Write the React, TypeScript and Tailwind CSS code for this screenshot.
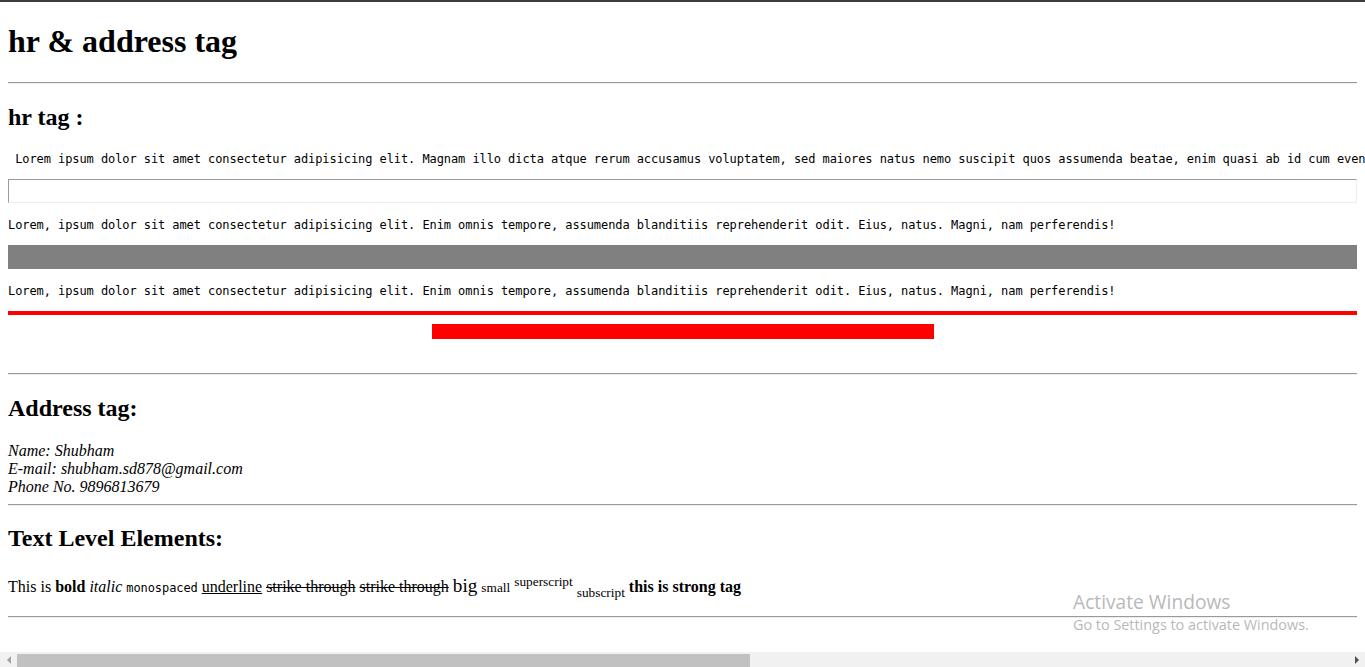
import React from "react";

const SERIF = "font-['Liberation_Serif','Times_New_Roman',serif]";
const MONO =
  "font-['DejaVu_Sans_Mono','Liberation_Mono',monospace] text-[12px] tracking-[-0.08px] leading-[14px]";

const LONG_LINE =
  " Lorem ipsum dolor sit amet consectetur adipisicing elit. Magnam illo dicta atque rerum accusamus voluptatem, sed maiores natus nemo suscipit quos assumenda beatae, enim quasi ab id cum eveniet. Quod, voluptas ratione? Odit ipsa architecto, dolorum recusandae nulla impedit quae placeat, laudantium maxime fugiat sint animi consequatur minus commodi.";

const SHORT_LINE =
  "Lorem, ipsum dolor sit amet consectetur adipisicing elit. Enim omnis tempore, assumenda blanditiis reprehenderit odit. Eius, natus. Magni, nam perferendis!";

/* ---------------- HR base ---------------- */

const Rule: React.FC = () => (
  <hr className="my-2 border-t border-b border-t-[#9a9a9a] border-b-[#eeeeee]" />
);

/* ---------------- HR TAG ---------------- */

const HrSection: React.FC = () => {
  return (
    <section>
      <h2 className="text-[24px] font-bold leading-[normal] my-[19.92px]">
        hr tag :
      </h2>

      <pre className={`${MONO} my-[13px] pt-[1px] whitespace-pre`}>{LONG_LINE}</pre>

      {/* hr con altezza */}
      <hr className="my-2 h-[24px] border border-[#eeeeee] border-t-[#9a9a9a] border-l-[#9a9a9a]" />

      <p className={`${MONO} my-[13px] pt-[2px] whitespace-nowrap`}>{SHORT_LINE}</p>

      {/* hr grigio pieno */}
      <hr className="my-2 h-[24px] border border-[#808080] bg-[#808080]" />

      <p className={`${MONO} my-[13px] pt-[2px] whitespace-nowrap`}>{SHORT_LINE}</p>

      {/* hr rossi */}
      <hr className="mt-[13px] mb-[9px] h-[4px] border-0 bg-[#ff0000]" />
      <hr className="my-2 mx-auto w-[502px] h-[15px] border-0 bg-[#ff0000]" />
      <div className="h-[18px]" />
      <Rule />
    </section>
  );
};

/* ---------------- ADDRESS ---------------- */

const AddressSection: React.FC = () => {
  return (
    <section>
      <h2 className="text-[24px] font-bold leading-[normal] my-[19.92px]">
        Address tag:
      </h2>
      <address className="italic text-[16px] leading-[18px] mt-[19.92px]">
        Name: Shubham
        <br />
        E-mail: shubham.sd878@gmail.com
        <br />
        Phone No. 9896813679
      </address>
      <Rule />
    </section>
  );
};

/* ---------------- TEXT LEVEL ---------------- */

const TextLevelSection: React.FC = () => {
  return (
    <section>
      <h2 className="text-[24px] font-bold leading-[normal] mt-[19px] mb-[22px]">
        Text Level Elements:
      </h2>
      <p className="text-[16px] leading-[normal] my-4">
        This is <b className="font-bold">bold</b> <i>italic</i>{" "}
        <span className="font-['DejaVu_Sans_Mono','Liberation_Mono',monospace] text-[12px] tracking-[-0.08px]">
          monospaced
        </span>{" "}
        <u>underline</u> <s>strike through</s> <del>strike through</del>{" "}
        <span className="text-[19.2px]">big</span>{" "}
        <span className="text-[13.33px]">small</span>{" "}
        <span className="text-[13.33px] align-super">superscript</span>{" "}
        <span className="text-[13.33px] align-sub">subscript</span>{" "}
        <strong className="font-bold">this is strong tag</strong>
      </p>
      <Rule />
    </section>
  );
};

/* ---------------- SCROLLBAR ---------------- */

const HScrollbar: React.FC = () => (
  <div className="h-[15px] shrink-0 flex items-center bg-[#f1f1f1]">
    <div className="w-[17px] h-full flex items-center justify-center">
      <div className="w-0 h-0 border-y-[4px] border-y-transparent border-r-[4px] border-r-[#a3a3a3]" />
    </div>
    <div className="w-[733px] h-[13px] self-end bg-[#c1c1c1]" />
    <div className="flex-1" />
    <div className="w-[17px] h-full flex items-center justify-center">
      <div className="w-0 h-0 border-y-[4px] border-y-transparent border-l-[4px] border-l-[#505050]" />
    </div>
  </div>
);

/* ---------------- PAGE ---------------- */

const App: React.FC = () => {
  return (
    <div className={`relative h-screen flex flex-col overflow-hidden bg-white text-black ${SERIF}`}>
      <div className="h-[2px] shrink-0 bg-[#3c3c3c]" />

      <div className="flex-1 overflow-hidden">
        <div className="mx-2">
          <h1 className="text-[32px] font-bold leading-[normal] my-[21.44px]">
            hr &amp; address tag
          </h1>
          <Rule />
          <HrSection />
          <AddressSection />
          <TextLevelSection />
        </div>
      </div>

      <HScrollbar />

      {/* Watermark Windows */}
      <div className="absolute left-[1073px] top-[589px] text-[#b9b9b9] font-['Open_Sans','Noto_Sans',sans-serif] pointer-events-none">
        <div className="text-[19.2px] leading-[26px]">Activate Windows</div>
        <div className="text-[14.4px] leading-[20px]">Go to Settings to activate Windows.</div>
      </div>
    </div>
  );
};

export default App;
